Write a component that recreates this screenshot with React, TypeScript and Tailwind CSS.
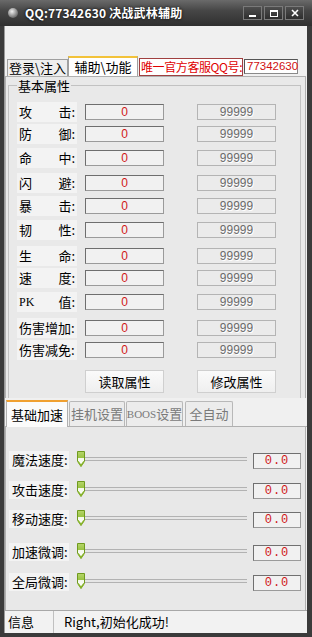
import React from "react";

const CJK = "font-['Noto_Sans_CJK_SC','Noto_Sans',sans-serif]";

type Row = { a: string; b?: string; full?: string; pk?: boolean; mt: string };

const rows: Row[] = [
  { a: "攻", b: "击:", mt: "mt-[9px]" },
  { a: "防", b: "御:", mt: "mt-[6px]" },
  { a: "命", b: "中:", mt: "mt-[8px]" },
  { a: "闪", b: "避:", mt: "mt-[9px]" },
  { a: "暴", b: "击:", mt: "mt-[7px]" },
  { a: "韧", b: "性:", mt: "mt-[8px]" },
  { a: "生", b: "命:", mt: "mt-[10px]" },
  { a: "速", b: "度:", mt: "mt-[6px]" },
  { a: "PK", b: "值:", pk: true, mt: "mt-[8px]" },
  { a: "", full: "伤害增加:", mt: "mt-[10px]" },
  { a: "", full: "伤害减免:", mt: "mt-[6px]" },
];

const sliders = [
  { l: "魔法速度:", mt: "mt-[24px]" },
  { l: "攻击速度:", mt: "mt-[12px]" },
  { l: "移动速度:", mt: "mt-[11px]" },
  { l: "加速微调:", mt: "mt-[15px]" },
  { l: "全局微调:", mt: "mt-[12px]" },
];

function Thumb() {
  return (
    <svg width="10" height="17" viewBox="0 0 10 17" className="absolute left-0 top-0">
      <defs>
        <linearGradient id="tg" x1="0" y1="0" x2="0" y2="1">
          <stop offset="0" stopColor="#b6d66a" />
          <stop offset="0.4" stopColor="#9cc447" />
          <stop offset="0.45" stopColor="#f4f8ec" />
          <stop offset="1" stopColor="#ffffff" />
        </linearGradient>
      </defs>
      <path d="M1.5 0.5 H8.5 V10 L5 15.5 L1.5 10 Z" fill="url(#tg)" stroke="#6f9a1e" strokeWidth="1" />
      <path d="M2 10.5 L5 14.5 L8 10.5" fill="none" stroke="#88b42c" strokeWidth="1.4" />
    </svg>
  );
}

export default function App() {
  return (
    <div className={`w-[312px] h-[637px] bg-[#3b3b3b] flex flex-col ${CJK}`}>
      {/* title bar */}
      <div className="h-[26px] flex items-center bg-[linear-gradient(#6a6a6a,#474747_40%,#2f2f2f)] shrink-0">
        <div className="ml-[8px] w-[10px] h-[10px] rounded-full bg-[radial-gradient(circle_at_40%_35%,#f0f0f0,#8a8a8a_55%,#3a3a3a)]" />
        <div className="ml-[7px] text-white font-bold text-[12px] leading-[18px] [text-shadow:0_0_3px_#000] tracking-[0.2px]">
          QQ:77342630 决战武林辅助
        </div>
        <div className="ml-auto mr-[8px] flex gap-[2px]">
          {["min", "max", "close"].map((k) => (
            <div
              key={k}
              className="w-[19px] h-[14px] border border-[#7a7a7a] bg-[linear-gradient(#4e4e4e,#2e2e2e)] flex items-center justify-center"
            >
              {k === "min" && <div className="w-[7px] h-[2px] bg-white mt-[5px]" />}
              {k === "max" && <div className="w-[8px] h-[7px] border border-white border-t-2" />}
              {k === "close" && (
                <svg width="8" height="8" viewBox="0 0 8 8">
                  <path d="M1 1 L7 7 M7 1 L1 7" stroke="#fff" strokeWidth="1.6" />
                </svg>
              )}
            </div>
          ))}
        </div>
      </div>

      {/* client */}
      <div className="flex-1 ml-[4px] mr-[5px] mb-[4px] bg-[#f0f0f0] flex flex-col border-l border-[#9a9a9a]">
        <div className="h-[31px] shrink-0" />
        {/* top tabs */}
        <div className="h-[19px] flex items-end pl-[2px] shrink-0">
          <div className="w-[61px] h-[17px] border border-b-0 border-[#a0a0a0] bg-[#eeeeee] text-[13px] leading-[16px] text-black flex items-center justify-center whitespace-nowrap">
            {"登录\\注入"}
          </div>
          <div className="w-[70px] h-[20px] border-x border-[#a0a0a0] border-t-2 border-t-[#f2c23a] bg-white text-[13px] leading-[16px] text-black flex items-center justify-center whitespace-nowrap">
            {"辅助\\功能"}
          </div>
          <div className="ml-[1px] self-start mt-[1px] w-[104px] h-[18px] border border-[#a04040] bg-white text-[12px] leading-[16px] text-[#e00000] flex items-center whitespace-nowrap pl-[1px] tracking-[-0.4px] overflow-hidden">
            唯一官方客服QQ号:
          </div>
          <div className="ml-[1px] self-start mt-[2px] w-[54px] h-[15px] border border-[#8a8a8a] border-t-[#555] border-l-[#555] bg-white text-[11.5px] leading-[13px] text-[#d01010] font-['Liberation_Sans',sans-serif] pl-[2px] flex items-center">
            77342630
          </div>
        </div>

        {/* upper panel */}
        <div className="h-[322px] shrink-0 bg-[#e9e9e9] border-x border-t border-[#b0b0b0] mr-[1px] flex flex-col pt-[8px] pl-[2px] pr-[4px]">
          <div className="flex-1 border border-b-0 border-[#c2c2c2] flex flex-col pl-[8px]">
            <div className="-mt-[9px] w-fit px-[1px] bg-[#e9e9e9] text-[13px] leading-[18px] text-black">
              基本属性
            </div>
            {rows.map((r, i) => (
              <div key={i} className={`flex items-center h-[16px] ${r.mt}`}>
                <div className="w-[60px] h-[20px] bg-[#f3f3f3] flex items-center justify-between pl-[2px] pr-[2px] text-[13px] leading-[18px] text-black whitespace-nowrap">
                  {r.full ? (
                    <span>{r.full}</span>
                  ) : (
                    <>
                      <span className={r.pk ? "font-['Liberation_Serif',serif] text-[12px]" : ""}>{r.a}</span>
                      <span>{r.b}</span>
                    </>
                  )}
                </div>
                <div className="ml-[8px] w-[79px] h-[16px] border border-[#6e6e6e] border-r-[#9a9a9a] border-b-[#9a9a9a] bg-[#f1f1f1] flex items-center justify-center text-[12px] leading-[14px] text-[#d01818] font-['Liberation_Sans',sans-serif]">
                  0
                </div>
                <div className="ml-[33px] w-[79px] h-[16px] border border-[#b4b4b4] bg-[#ebebeb] flex items-center justify-center text-[12px] leading-[14px] text-[#6c6c6c] font-['Liberation_Sans',sans-serif] [text-shadow:1px_1px_0_#fff]">
                  99999
                </div>
              </div>
            ))}
            <div className="flex mt-[12px] ml-[68px]">
              <div className="w-[79px] h-[23px] border border-[#cfcfcf] bg-[linear-gradient(#fafafa,#efefef)] flex items-center justify-center text-[13px] leading-[18px] text-black">
                读取属性
              </div>
              <div className="ml-[33px] w-[79px] h-[23px] border border-[#cfcfcf] bg-[linear-gradient(#fafafa,#efefef)] flex items-center justify-center text-[13px] leading-[18px] text-black">
                修改属性
              </div>
            </div>
          </div>
        </div>

        {/* lower tabs */}
        <div className="h-[29px] shrink-0 flex items-end pl-[1px] border-b border-[#b0b0b0] bg-[#f0f0f0]">
          <div className="w-[62px] h-[27px] border-x border-[#b0b0b0] border-t-2 border-t-[#f0a030] bg-[#fbfbfb] flex items-center justify-center text-[13px] leading-[18px] text-black -mb-[1px] whitespace-nowrap">
            基础加速
          </div>
          <div className="ml-[1px] w-[56px] h-[25px] border border-b-0 border-[#b8b8b8] rounded-t-[2px] bg-[#ececec] flex items-center justify-center text-[13px] leading-[18px] text-[#7a7a7a] whitespace-nowrap">
            挂机设置
          </div>
          <div className="ml-[1px] w-[57px] h-[25px] border border-b-0 border-[#b8b8b8] rounded-t-[2px] bg-[#ececec] flex items-center justify-center text-[13px] leading-[18px] text-[#7a7a7a] whitespace-nowrap">
            <span className="font-['Liberation_Serif',serif] text-[11px]">BOOS</span>设置
          </div>
          <div className="ml-[2px] w-[48px] h-[25px] border border-b-0 border-[#b8b8b8] rounded-t-[2px] bg-[#ececec] flex items-center justify-center text-[13px] leading-[18px] text-[#7a7a7a] whitespace-nowrap">
            全自动
          </div>
        </div>

        {/* lower panel */}
        <div className="flex-1 bg-[#e8e8e8] border-x border-[#b0b0b0] mr-[1px] flex flex-col pl-[3px]">
          {sliders.map((s, i) => (
            <div key={i} className={`flex items-start h-[18px] ${s.mt}`}>
              <div className="w-[60px] h-[18px] bg-[#f3f3f3] pl-[3px] text-[13px] leading-[18px] text-black whitespace-nowrap">
                {s.l}
              </div>
              <div className="relative ml-[7px] w-[171px] h-[17px]">
                <div className="absolute left-[4px] right-0 top-[6px] h-[4px] border-y border-[#b2b2b2] bg-[#e6e6e6]" />
                <Thumb />
              </div>
              <div className="ml-[6px] mt-[2px] w-[48px] h-[16px] border border-[#707070] border-r-[#9a9a9a] border-b-[#9a9a9a] bg-[#f1f1f1] flex items-center justify-center text-[12px] leading-[14px] text-[#d01818] font-['Liberation_Mono',monospace] tracking-[1px]">
                0.0
              </div>
            </div>
          ))}
        </div>

        {/* status bar */}
        <div className="h-[23px] shrink-0 border-t border-[#a8a8a8] bg-[#f2f2f2] flex items-center text-[13px] leading-[18px] text-black">
          <div className="w-[49px] pl-[3px] h-full flex items-center border-r border-[#c0c0c0]">信息</div>
          <div className="pl-[10px]">Right,初始化成功!</div>
        </div>
      </div>
    </div>
  );
}
